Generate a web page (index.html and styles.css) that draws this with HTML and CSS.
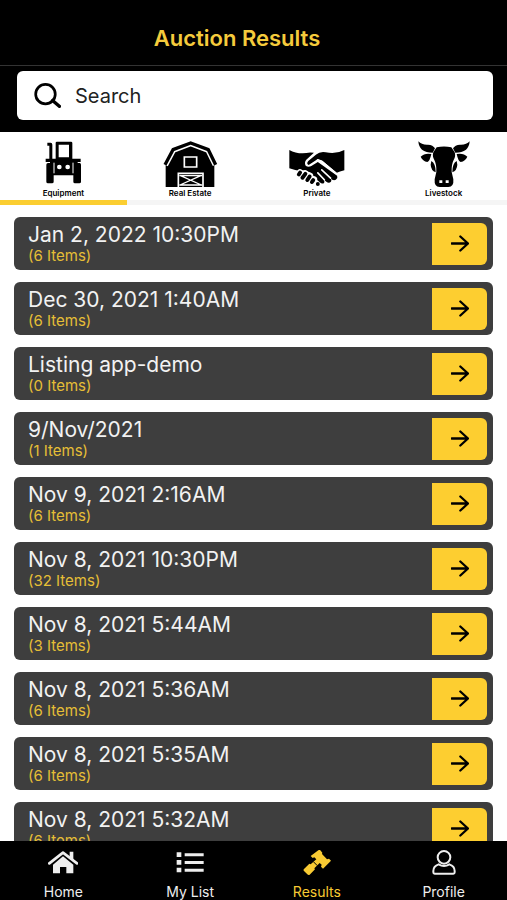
FILE: index.html
```html
<!DOCTYPE html>
<html lang="en">
<head>
<meta charset="utf-8">
<meta name="viewport" content="width=device-width, initial-scale=1">
<title>Auction Results</title>
<link rel="stylesheet" href="styles.css">
</head>
<body>
<svg class="sprite" aria-hidden="true">
  <symbol id="arrow" viewBox="0 0 54 50"><path d="M2 25H50M28 4L51 25L28 46" fill="none" stroke="currentColor" stroke-width="7" stroke-linecap="round" stroke-linejoin="round"/></symbol>
</svg>
<div class="app">
  <header class="header">
    <h1 class="title">Auction Results</h1>
  </header>
  <div class="search-bar">
    <label class="search">
      <svg class="search-icon" viewBox="0 0 80 74" aria-hidden="true"><circle cx="34" cy="33" r="29" fill="none" stroke="currentColor" stroke-width="8"/><path d="M55 52L75 69" stroke="currentColor" stroke-width="10" stroke-linecap="round"/></svg>
      <input class="search-input" type="text" placeholder="Search" aria-label="Search">
    </label>
  </div>
  <nav class="tabs" aria-label="Categories">
    <a class="tab tab-active" href="#equipment">
      <svg class="tab-icon" viewBox="26 24 150 144" aria-hidden="true">
        <path fill-rule="evenodd" d="M79 32Q79 29 83 29H125Q129 29 129 33V80H154V90H145V93H151Q155 93 155 98V149Q155 154 150 154H137Q132 154 132 149V130H73V149Q73 154 68 154H56Q51 154 51 149V98Q51 93 56 93H62V90H49V80H60V41H54V32H64Q69 32 69 38V80H79ZM88 38V76H119V38ZM90 98A7 7 0 1 0 90 112A7 7 0 1 0 90 98ZM115 98A7 7 0 1 0 115 112A7 7 0 1 0 115 98Z"/>
        <path d="M74 92V124M131 92V124" stroke="#fff" stroke-width="3"/>
      </svg>
      <span class="tab-label">Equipment</span>
    </a>
    <a class="tab" href="#real-estate">
      <svg class="tab-icon tab-icon-wide" viewBox="37 30 168 138" aria-hidden="true">
        <path d="M48 168V100L72 62L123 44L174 62L194 100V168Z"/>
        <path d="M46 101L70 56L123 36L176 56L198 101" fill="none" stroke="#fff" stroke-width="19" stroke-linejoin="round"/>
        <path d="M46 101L70 56L123 36L176 56L198 101" fill="none" stroke="#000" stroke-width="10" stroke-linejoin="round"/>
        <path d="M104 78H141V108H104ZM86 168V127H160V168" fill="none" stroke="#fff" stroke-width="5"/>
        <path d="M91 133L155 162M155 133L91 162M89 134H158M89 162H158" fill="none" stroke="#fff" stroke-width="4"/>
      </svg>
      <span class="tab-label">Real Estate</span>
    </a>
    <a class="tab" href="#private">
      <svg class="tab-icon tab-icon-wide" viewBox="57 24 171 140" aria-hidden="true">
        <path d="M58 51Q84 66 122 59L133 60L109 82Q103 91 108 99Q114 104 124 101L145 88L204 130Q207 137 200 142Q195 145 189 142L181 136Q189 142 185 148Q179 154 171 148L154 133Q169 146 164 152Q158 156 151 150L134 135L120 119L104 113L84 114L76 112L58 107Z"/>
        <path d="M226 51Q200 65 169 58Q151 55 140 65L116 85Q109 94 117 97L145 79L158 83L203 121Q211 116 226 113Z"/>
        <path d="M144 82L158 87L204 126M157 112L184 137M145 121L165 142M62 113L82 119" fill="none" stroke="#fff" stroke-width="5" stroke-linecap="round"/>
        <path d="M91 120L84 129M107 123L98 138M121 130L113 145M133 141L126 150" fill="none" stroke="#fff" stroke-width="20" stroke-linecap="round"/>
        <path d="M91 120L87 126M107 124L98 136M120 132L113 143M131 143L127 149M145 155V155" fill="none" stroke="#000" stroke-width="12" stroke-linecap="round"/>
      </svg>
      <span class="tab-label">Private</span>
    </a>
    <a class="tab" href="#livestock">
      <svg class="tab-icon tab-icon-wide" viewBox="48 29 168 140" aria-hidden="true">
        <path id="horn" d="M55 31Q65 42 84 41Q99 42 105 52L98 65Q78 65 66 56Q56 47 55 31ZM62 77Q74 65 94 69Q89 92 82 93Q68 90 62 77ZM94 90Q107 97 107 124Q93 118 92 101Z"/>
        <use href="#horn" transform="translate(264 0) scale(-1 1)"/>
        <path fill-rule="evenodd" d="M110 49Q132 44 154 49L164 64Q168 76 161 87Q154 100 155 123L160 145Q162 168 145 168H119Q102 168 104 145L109 123Q110 100 103 87Q96 76 100 64ZM118 148V156H127V148ZM137 148V156H146V148Z"/>
      </svg>
      <span class="tab-label">Livestock</span>
    </a>
  </nav>
  <main class="results">
    <article class="card"><div class="card-text"><h2 class="card-title">Jan 2, 2022 10:30PM</h2><p class="card-count">(6 Items)</p></div><button class="open" aria-label="Open Jan 2, 2022 10:30PM"><svg class="arrow"><use href="#arrow"/></svg></button></article>
    <article class="card"><div class="card-text"><h2 class="card-title">Dec 30, 2021 1:40AM</h2><p class="card-count">(6 Items)</p></div><button class="open" aria-label="Open Dec 30, 2021 1:40AM"><svg class="arrow"><use href="#arrow"/></svg></button></article>
    <article class="card"><div class="card-text"><h2 class="card-title">Listing app-demo</h2><p class="card-count">(0 Items)</p></div><button class="open" aria-label="Open Listing app-demo"><svg class="arrow"><use href="#arrow"/></svg></button></article>
    <article class="card"><div class="card-text"><h2 class="card-title">9/Nov/2021</h2><p class="card-count">(1 Items)</p></div><button class="open" aria-label="Open 9/Nov/2021"><svg class="arrow"><use href="#arrow"/></svg></button></article>
    <article class="card"><div class="card-text"><h2 class="card-title">Nov 9, 2021 2:16AM</h2><p class="card-count">(6 Items)</p></div><button class="open" aria-label="Open Nov 9, 2021 2:16AM"><svg class="arrow"><use href="#arrow"/></svg></button></article>
    <article class="card"><div class="card-text"><h2 class="card-title">Nov 8, 2021 10:30PM</h2><p class="card-count">(32 Items)</p></div><button class="open" aria-label="Open Nov 8, 2021 10:30PM"><svg class="arrow"><use href="#arrow"/></svg></button></article>
    <article class="card"><div class="card-text"><h2 class="card-title">Nov 8, 2021 5:44AM</h2><p class="card-count">(3 Items)</p></div><button class="open" aria-label="Open Nov 8, 2021 5:44AM"><svg class="arrow"><use href="#arrow"/></svg></button></article>
    <article class="card"><div class="card-text"><h2 class="card-title">Nov 8, 2021 5:36AM</h2><p class="card-count">(6 Items)</p></div><button class="open" aria-label="Open Nov 8, 2021 5:36AM"><svg class="arrow"><use href="#arrow"/></svg></button></article>
    <article class="card"><div class="card-text"><h2 class="card-title">Nov 8, 2021 5:35AM</h2><p class="card-count">(6 Items)</p></div><button class="open" aria-label="Open Nov 8, 2021 5:35AM"><svg class="arrow"><use href="#arrow"/></svg></button></article>
    <article class="card"><div class="card-text"><h2 class="card-title">Nov 8, 2021 5:32AM</h2><p class="card-count">(6 Items)</p></div><button class="open" aria-label="Open Nov 8, 2021 5:32AM"><svg class="arrow"><use href="#arrow"/></svg></button></article>
  </main>
  <nav class="bottom-nav" aria-label="Main">
    <a class="nav-item" href="#home">
      <svg class="nav-icon" viewBox="146 181 90 75" aria-hidden="true"><path d="M150 221L191 189L233 221" fill="none" stroke="currentColor" stroke-width="8" stroke-linecap="round" stroke-linejoin="round"/><path d="M211 186H222V211L211 202ZM191 200L222 225V251H201V232H182V251H161V225Z" fill="currentColor"/></svg>
      <span>Home</span>
    </a>
    <a class="nav-item" href="#my-list">
      <svg class="nav-icon" viewBox="526 181 90 75" aria-hidden="true"><path d="M531 188H545V202H531ZM531 211H545V225H531ZM531 234H545V248H531ZM555 191H612V200H555ZM555 214H612V223H555ZM555 237H612V246H555Z" fill="currentColor"/></svg>
      <span>My List</span>
    </a>
    <a class="nav-item nav-item-active" href="#results">
      <svg class="nav-icon" viewBox="147 181 90 75" aria-hidden="true"><path d="M202 182L208 189L207 193L222 209L228 207L234 213L210 237L204 231L206 225L200 220L184 236L186 239L170 255Q166 257 163 254L153 244Q150 241 153 238L169 222L173 224L190 209L184 203L179 205L173 199L196 182Q199 179 202 182Z" fill="currentColor"/><path d="M181 216L193 228" stroke="#000" stroke-width="3"/></svg>
      <span>Results</span>
    </a>
    <a class="nav-item" href="#profile">
      <svg class="nav-icon" viewBox="527 181 90 75" aria-hidden="true"><circle cx="572" cy="203" r="19" fill="none" stroke="currentColor" stroke-width="6"/><path d="M556 224Q572 234 588 224Q604 229 604 244V248Q604 252 600 252H544Q540 252 540 248V244Q540 229 556 224Z" fill="none" stroke="currentColor" stroke-width="6" stroke-linejoin="round"/></svg>
      <span>Profile</span>
    </a>
  </nav>
</div>
</body>
</html>
```
FILE: styles.css
```css
* { box-sizing: border-box; }

body {
  margin: 0;
  background: #fff;
  font-family: Inter, "Liberation Sans", sans-serif;
}

h1, h2, p { margin: 0; font-weight: 400; }
a { color: inherit; text-decoration: none; }
.sprite { display: none; }

.app {
  display: flex;
  flex-direction: column;
  height: 100vh;
}

.header {
  flex: none;
  padding: 24px 16px 13px;
  border-bottom: 1px solid #333;
  background: #000;
  text-align: center;
}

.title {
  padding-right: 33px;
  color: #f5cb3c;
  font-size: 22px;
  font-weight: 600;
  line-height: 28px;
}

.search-bar {
  flex: none;
  padding: 5px 14px 12px 17px;
  background: #000;
}

.search {
  display: flex;
  align-items: center;
  gap: 14px;
  height: 49px;
  padding: 0 17px;
  border-radius: 6px;
  background: #fff;
}

.search-icon { flex: none; width: 27px; height: 25px; color: #000; }

.search-input {
  flex: 1;
  min-width: 0;
  padding: 0;
  border: 0;
  outline: 0;
  background: none;
  color: #222;
  font: 400 20px/28px Inter, "Liberation Sans", sans-serif;
}

.search-input::placeholder { color: #222; opacity: 1; }

.tabs {
  display: grid;
  grid-template-columns: repeat(4, 1fr);
  flex: none;
  background: #fff;
}

.tab {
  display: flex;
  flex-direction: column;
  align-items: center;
  padding: 8px 0 2px;
  border-bottom: 5px solid #f5f5f5;
  color: #000;
}

.tab-active { border-color: #fbce31; }
.tab-icon { width: 50px; height: 48px; }
.tab-icon-wide { width: 56px; }
.tab-label { font-size: 8px; font-weight: 600; line-height: 10px; }

.results {
  display: flex;
  flex: 1;
  flex-direction: column;
  gap: 12px;
  min-height: 0;
  padding: 12px 14px;
  overflow: hidden;
}

.card {
  display: flex;
  flex: none;
  align-items: center;
  justify-content: space-between;
  height: 53px;
  padding: 0 6px 0 14px;
  border-radius: 6px;
  background: #3e3e3e;
}

.card-title { color: #f2f2f2; font-size: 21px; line-height: 24px; }
.card-count { color: #e6bf36; font-size: 15px; line-height: 17px; }

.open {
  display: grid;
  place-items: center;
  width: 55px;
  height: 42px;
  padding: 0;
  border: 0;
  border-radius: 0 6px 6px 0;
  background: #fdce30;
  color: #000;
}

.arrow { width: 18px; height: 17px; }

.bottom-nav {
  display: grid;
  grid-template-columns: repeat(4, 1fr);
  flex: none;
  height: 59px;
  background: #000;
  color: #eee;
}

.nav-item {
  display: flex;
  flex-direction: column;
  align-items: center;
  gap: 9px;
  padding-top: 9px;
  font-size: 14px;
  line-height: 16px;
}

.nav-item-active { color: #f8ca33; }
.nav-icon { flex: none; width: 30px; height: 25px; }
```
